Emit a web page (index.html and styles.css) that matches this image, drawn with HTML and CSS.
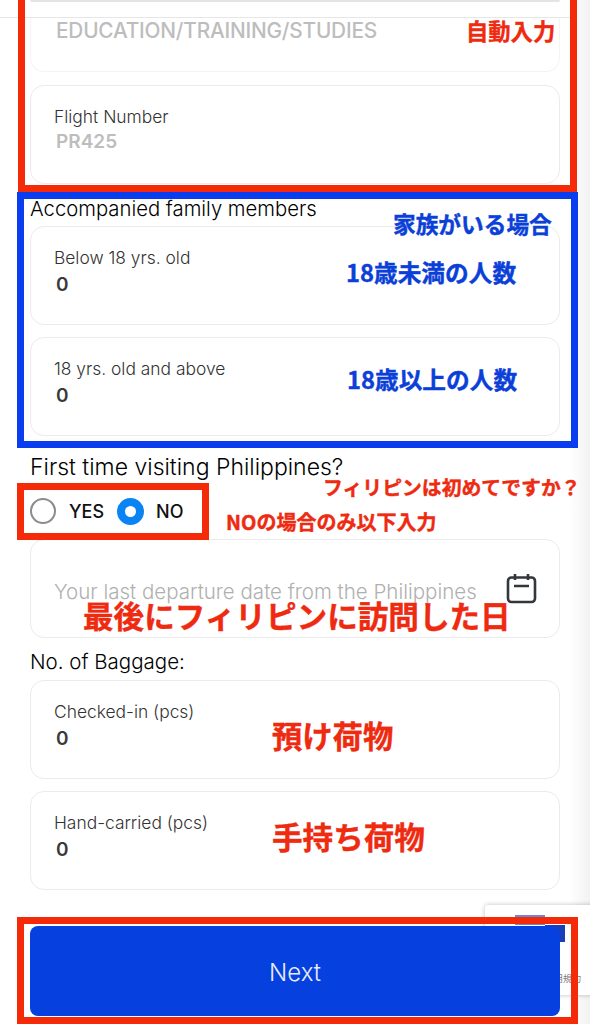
FILE: index.html
```html
<!DOCTYPE html>
<html lang="ja">
<head>
  <meta charset="UTF-8">
  <title>Travel details</title>
  <link rel="stylesheet" href="styles.css">
</head>
<body>
  <div class="page">
    <div class="top-strip"><div class="top-bar"></div></div>

    <div class="form">
      <div class="card card-cut">
        <div class="value value-muted value-top">EDUCATION/TRAINING/STUDIES</div>
      </div>
      <div class="card card-next">
        <div class="label">Flight Number</div>
        <div class="value value-muted">PR425</div>
      </div>

      <h2 class="section-title">Accompanied family members</h2>
      <div class="card">
        <div class="label">Below 18 yrs. old</div>
        <div class="value">0</div>
      </div>
      <div class="card card-next">
        <div class="label">18 yrs. old and above</div>
        <div class="value">0</div>
      </div>

      <h2 class="section-title title-first">First time visiting Philippines?</h2>
      <div class="radios">
        <span class="radio"></span><span class="radio-text">YES</span>
        <span class="radio radio-on"></span><span class="radio-text">NO</span>
      </div>
      <div class="card card-date">
        <div class="placeholder">Your last departure date from the Philippines</div>
        <svg class="calendar" viewBox="0 0 31 31" fill="none" stroke="#33363a" stroke-width="2.6">
          <rect x="2" y="4.5" width="27" height="24.5" rx="3.5"/>
          <path d="M9 1v6M22 1v6M8 13h15"/>
        </svg>
      </div>

      <h2 class="section-title title-baggage">No. of Baggage:</h2>
      <div class="card">
        <div class="label">Checked-in (pcs)</div>
        <div class="value">0</div>
      </div>
      <div class="card card-next">
        <div class="label">Hand-carried (pcs)</div>
        <div class="value">0</div>
      </div>

      <button class="next-btn">Next</button>
    </div>

    <div class="side-shade"></div>

    <div class="recaptcha">
      <svg class="recaptcha-logo" viewBox="0 0 50 28">
        <path d="M0 0h30v10H0z" fill="#6b86e0"/>
        <path d="M30 10h20v17H30z" fill="#1c3fb8"/>
      </svg>
      <div class="recaptcha-text">利用規約</div>
    </div>

    <!-- annotations drawn over the screenshot -->
    <div class="box box-red box-auto"></div>
    <div class="box box-blue box-family"></div>
    <div class="box box-red box-radio"></div>
    <div class="box box-red box-next"></div>

    <div class="note note-red note-auto">自動入力</div>
    <div class="note note-blue note-family">家族がいる場合</div>
    <div class="note note-blue note-under">18歳未満の人数</div>
    <div class="note note-blue note-over">18歳以上の人数</div>
    <div class="note note-red note-first">フィリピンは初めてですか？</div>
    <div class="note note-red note-only">NOの場合のみ以下入力</div>
    <div class="note note-red note-last">最後にフィリピンに訪問した日</div>
    <div class="note note-red note-checked">預け荷物</div>
    <div class="note note-red note-hand">手持ち荷物</div>
  </div>
</body>
</html>
```

FILE: styles.css
```css
* {
  margin: 0;
  padding: 0;
  box-sizing: border-box;
}

html, body {
  width: 100%;
  height: 100%;
  background: #fff;
  overflow: hidden;
}

.page {
  position: relative;
  width: 590px;
  height: 1024px;
  overflow: hidden;
  font-family: 'Inter', 'Noto Sans CJK JP', sans-serif;
  color: #111;
}

.top-strip {
  height: 18px;
  padding: 0 30px;
  border-bottom: 1px solid #e6e6e6;
}

.top-bar {
  height: 2px;
  background: #e4e4e4;
  border-radius: 0 0 6px 6px;
}

.form {
  display: flex;
  flex-direction: column;
  padding: 0 30px;
}

.card {
  height: 99px;
  padding: 19px 24px 0 23px;
  background: #fff;
  border: 1px solid #ebebeb;
  border-radius: 14px;
}

.card-next {
  margin-top: 12px;
}

.card-cut {
  height: 54px;
  padding-top: 0;
  border-top: none;
  border-color: #f4f4f4;
  border-radius: 0 0 14px 14px;
  margin-bottom: 1px;
}

.label {
  font-size: 17.4px;
  font-weight: 300;
  line-height: 24px;
  color: #333;
}

.value {
  padding: 2px 0 0 2px;
  font-size: 19px;
  font-weight: 600;
  line-height: 26px;
  color: #3a3a3a;
}

.value-muted {
  padding-top: 0;
  color: #bdbdbd;
}

.value-top {
  padding-top: 0;
  font-size: 20.8px;
  font-weight: 500;
  letter-spacing: -0.2px;
}

.section-title {
  margin: 13px 0 5px;
  font-size: 20.3px;
  font-weight: 300;
  line-height: 24px;
  color: #000;
}

.title-first {
  margin: 19px 0 0;
  font-size: 23px;
}

.title-baggage {
  margin-top: 12px;
  margin-bottom: 6px;
  font-size: 20.5px;
}

.radios {
  display: flex;
  align-items: center;
  height: 26px;
  margin: 19px 0 15px;
}

.radio {
  width: 26px;
  height: 26px;
  border: 2px solid #8c8c8c;
  border-radius: 50%;
  margin-right: 13px;
}

.radio-on {
  width: 27px;
  height: 27px;
  border: 8.5px solid #0a84f5;
  margin-right: 12px;
}

.radio-text {
  margin-right: 13px;
  font-size: 18px;
  font-weight: 500;
}

.card-date {
  display: flex;
  justify-content: space-between;
  padding: 33px 22px 0 23px;
}

.placeholder {
  margin-top: 7px;
  font-size: 20.5px;
  font-weight: 300;
  line-height: 24px;
  white-space: nowrap;
  color: #b0b0b0;
}

.calendar {
  flex: none;
  width: 31px;
  height: 31px;
}

.next-btn {
  position: relative;
  z-index: 2;
  height: 90px;
  margin-top: 36px;
  padding-top: 2px;
  background: #0640de;
  border: none;
  border-radius: 8px;
  color: #e8edfb;
  font-family: 'Inter', sans-serif;
  font-size: 24px;
  font-weight: 300;
}

.side-shade {
  position: absolute;
  top: 0;
  right: 0;
  width: 20px;
  height: 100%;
  background: linear-gradient(to right, #fff, #f2f2f2);
}

.recaptcha {
  position: absolute;
  left: 485px;
  top: 905px;
  width: 120px;
  height: 90px;
  background: #fff;
  border-radius: 3px;
  box-shadow: 0 0 5px rgba(0, 0, 0, 0.25);
}

.recaptcha-logo {
  position: absolute;
  left: 30px;
  top: 10px;
  width: 50px;
  height: 28px;
}

.recaptcha-text {
  position: absolute;
  left: 60px;
  top: 67px;
  font-size: 9px;
  color: #777;
}

.box {
  position: absolute;
  z-index: 3;
  border: 7.5px solid;
}

.box-red {
  border-color: #f52a08;
}

.box-blue {
  border-color: #0a3cf0;
}

.box-auto {
  left: 18px;
  top: -20px;
  width: 559px;
  height: 212px;
}

.box-family {
  left: 17px;
  top: 192px;
  width: 561px;
  height: 256px;
}

.box-radio {
  left: 17px;
  top: 483px;
  width: 192px;
  height: 57px;
}

.box-next {
  left: 17px;
  top: 917px;
  width: 561px;
  height: 107px;
}

.note {
  position: absolute;
  z-index: 4;
  font-family: 'Noto Sans CJK JP', sans-serif;
  font-weight: 700;
  line-height: 1;
  white-space: nowrap;
  -webkit-text-stroke: 0.4px currentColor;
}

.note-red {
  color: #ee2a10;
}

.note-blue {
  color: #0b40d8;
}

.note-auto {
  left: 466px;
  top: 19px;
  font-size: 22.3px;
}

.note-family {
  left: 393px;
  top: 213px;
  font-size: 22.7px;
}

.note-under {
  left: 346px;
  top: 261px;
  font-size: 23.7px;
}

.note-over {
  left: 347px;
  top: 368px;
  font-size: 23.7px;
}

.note-first {
  left: 323px;
  top: 477px;
  font-size: 19.85px;
}

.note-only {
  left: 226px;
  top: 512px;
  font-size: 20px;
}

.note-last {
  left: 83px;
  top: 600px;
  font-size: 30.6px;
}

.note-checked {
  left: 272px;
  top: 720px;
  font-size: 30.3px;
}

.note-hand {
  left: 272px;
  top: 821px;
  font-size: 30.6px;
}
```
